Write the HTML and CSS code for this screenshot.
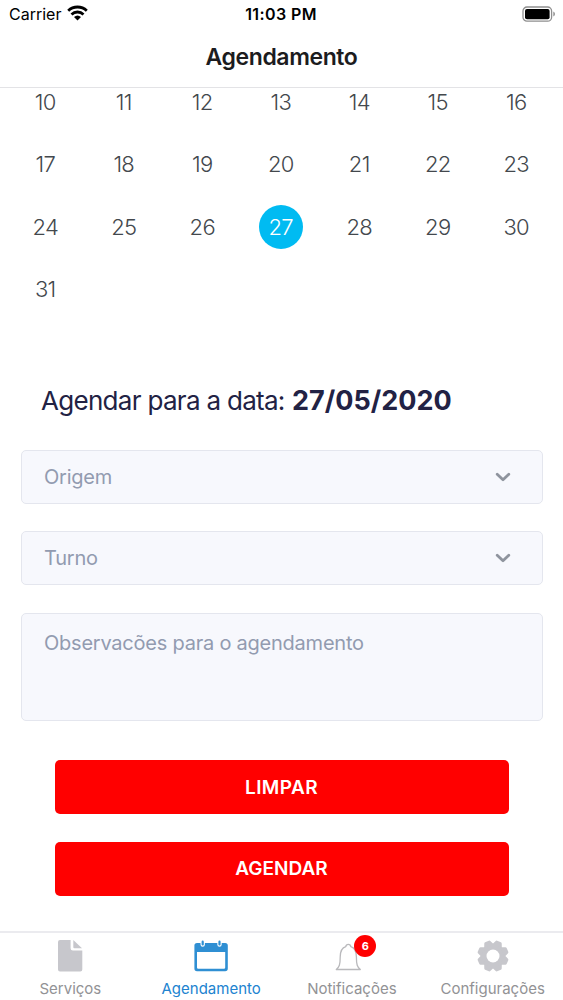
FILE: index.html
```html
<!DOCTYPE html>
<html lang="pt-BR">
<head>
    <meta charset="UTF-8">
    <meta name="viewport" content="width=device-width, initial-scale=1.0">
    <title>Agendamento</title>
    <link rel="stylesheet" href="styles.css">
</head>
<body>
    <header class="header">
        <div class="status-bar">
            <div class="carrier">
                <span>Carrier</span>
                <svg class="wifi" width="21" height="16" viewBox="0 0 21 16">
                    <g fill="none" stroke="#000" stroke-width="2.8">
                        <path d="M1.2 5.7a13.6 13.6 0 0 1 18.6 0"/>
                        <path d="M4.5 9.4a8.7 8.7 0 0 1 12 0"/>
                    </g>
                    <path d="M7 12a5.2 5.2 0 0 1 7 0l-3.5 3.5z"/>
                </svg>
            </div>
            <div class="time">11:03 PM</div>
            <div class="battery">
                <svg width="34" height="17" viewBox="0 0 34 17">
                    <rect x="1" y="1" width="28.6" height="14.2" rx="4" fill="none" stroke="#8e8e8e" stroke-width="1.3"/>
                    <rect x="3" y="3" width="24.6" height="10.2" rx="2" fill="#000"/>
                    <path d="M31.3 5.6q1.7.8 1.7 2.5t-1.7 2.5z" fill="#8e8e8e"/>
                </svg>
            </div>
        </div>
        <h1 class="title">Agendamento</h1>
    </header>

    <main class="content">
        <div class="calendar">
            <div class="day">10</div>
            <div class="day">11</div>
            <div class="day">12</div>
            <div class="day">13</div>
            <div class="day">14</div>
            <div class="day">15</div>
            <div class="day">16</div>
            <div class="day">17</div>
            <div class="day">18</div>
            <div class="day">19</div>
            <div class="day">20</div>
            <div class="day">21</div>
            <div class="day">22</div>
            <div class="day">23</div>
            <div class="day">24</div>
            <div class="day">25</div>
            <div class="day">26</div>
            <div class="day selected"><span>27</span></div>
            <div class="day">28</div>
            <div class="day">29</div>
            <div class="day">30</div>
            <div class="day">31</div>
        </div>

        <p class="date-label"><span class="date-text">Agendar para a data:</span> <b>27/05/2020</b></p>

        <form class="form">
            <div class="field">
                <span>Origem</span>
                <svg width="16" height="10" viewBox="0 0 16 10"><path d="M2.2 2.2 8 7.8l5.8-5.6"/></svg>
            </div>
            <div class="field">
                <span>Turno</span>
                <svg width="16" height="10" viewBox="0 0 16 10"><path d="M2.2 2.2 8 7.8l5.8-5.6"/></svg>
            </div>
            <textarea class="field notes" placeholder="Observacões para o agendamento"></textarea>
            <button type="button" class="btn btn-clear">LIMPAR</button>
            <button type="button" class="btn">AGENDAR</button>
        </form>
    </main>

    <nav class="tabs">
        <a class="tab">
            <svg width="36" height="36" viewBox="0 0 36 36" fill="#c7c7cc">
                <path d="M8 2h10.6v8.2a2.3 2.3 0 0 0 2.3 2.3h9.4v19a2 2 0 0 1-2 2H8a2 2 0 0 1-2-2V4a2 2 0 0 1 2-2z"/>
                <path d="M21.3 2l8.7 8.2h-7.7a1 1 0 0 1-1-1z"/>
            </svg>
            <span>Serviços</span>
        </a>
        <a class="tab active">
            <svg width="36" height="36" viewBox="0 0 36 36">
                <path fill="#2f8fd3" fill-rule="evenodd" d="M4 5h3.5v1.5a2.2 2.2 0 0 0 4.4 0V5h12.4v1.5a2.2 2.2 0 0 0 4.4 0V5h3.5a2.6 2.6 0 0 1 2.6 2.6v23a2.6 2.6 0 0 1-2.6 2.6H4a2.6 2.6 0 0 1-2.6-2.6v-23A2.6 2.6 0 0 1 4 5zM4 14v15.500a1.3 1.3 0 0 0 1.3 1.3h25.600a1.3 1.3 0 0 0 1.3-1.3V14z"/>
                <path d="M9.7 3.7v2.8M26.5 3.7v2.8" stroke="#2f8fd3" stroke-width="2.2" stroke-linecap="round"/>
            </svg>
            <span>Agendamento</span>
        </a>
        <a class="tab">
            <div class="bell">
                <svg width="36" height="36" viewBox="0 0 36 36" fill="none" stroke="#b9b9bc" stroke-width="1.3">
                    <path d="M3.300 31.500h24c-3-2.700-3.900-4.500-3.900-12.500 0-6.500-2.400-9.500-5.600-10.400-.2-1.600-1-2.300-2.500-2.300s-2.300.7-2.500 2.300C9.600 9.500 7.200 12.500 7.200 19c0 8-.9 9.800-3.900 12.500z" stroke-linejoin="round"/>
                </svg>
                <span class="badge">6</span>
            </div>
            <span>Notificações</span>
        </a>
        <a class="tab">
            <svg width="36" height="36" viewBox="-18 -18 36 36">
                <g fill="#c7c7cc">
                    <circle r="12"/>
                    <g id="teeth">
                        <path id="tooth" d="M-5.2-10.5-3.4-14.600q.4-1.100 1.4-1.100h4q1 0 1.4 1.100L5.2-10.5z" transform="rotate(22.5)"/>
                        <use href="#tooth" transform="rotate(45)"/>
                        <use href="#tooth" transform="rotate(90)"/>
                        <use href="#tooth" transform="rotate(135)"/>
                    </g>
                    <use href="#teeth" transform="rotate(180)"/>
                </g>
                <circle r="6.5" fill="#fff"/>
            </svg>
            <span>Configurações</span>
        </a>
    </nav>
</body>
</html>
```
FILE: styles.css
```css
* {
    box-sizing: border-box;
}
body {
    margin: 0;
    height: 1000px;
    display: flex;
    flex-direction: column;
    overflow: hidden;
    font-family: Inter, "Liberation Sans", sans-serif;
    background-color: #fff;
}
.header {
    height: 88px;
    border-bottom: 1px solid #e3e3e6;
}
.status-bar {
    display: grid;
    grid-template-columns: 1fr auto 1fr;
    align-items: center;
    height: 28px;
    padding: 0 8px 0 9px;
}
.carrier {
    display: flex;
    align-items: center;
    gap: 6px;
    font-size: 16px;
}
.wifi {
    margin-top: -2px;
}
.time {
    font-size: 16px;
    font-weight: 600;
    letter-spacing: 0.4px;
    margin-right: 2px;
}
.battery {
    display: flex;
    justify-content: flex-end;
    margin-right: -1px;
}
.title {
    margin: 0;
    line-height: 59px;
    text-align: center;
    font-size: 23px;
    font-weight: 600;
    letter-spacing: -0.4px;
    color: #1c1c1e;
}
.content {
    flex: 1;
    min-height: 0;
    overflow: hidden;
}
.calendar {
    display: grid;
    grid-template-columns: repeat(7, 78.5px);
    grid-auto-rows: 62.5px;
    margin: -17.5px 0 0 6px;
}
.day {
    display: flex;
    align-items: center;
    justify-content: center;
    font-size: 22px;
    font-weight: 300;
    letter-spacing: -0.7px;
    color: #43484d;
}
.selected span {
    width: 44px;
    height: 44px;
    line-height: 44px;
    border-radius: 50%;
    text-align: center;
    background-color: #00bbf2;
    color: #fff;
}
.date-label {
    margin: 61px 0 0 41px;
    height: 38px;
    line-height: 38px;
    font-size: 26px;
    color: #222244;
    white-space: nowrap;
}
.date-text {
    letter-spacing: -0.7px;
}
.date-label b {
    font-size: 27px;
    letter-spacing: 0.02px;
}
.form {
    display: flex;
    flex-direction: column;
    gap: 27.5px;
    padding: 30px 20.5px 0;
}
.field {
    display: flex;
    align-items: center;
    justify-content: space-between;
    height: 54px;
    padding: 0 31px 0 22.5px;
    border: 1px solid #e4e6ee;
    border-radius: 5px;
    background-color: #f7f8fd;
    font-size: 20px;
    letter-spacing: -0.23px;
    color: #929bb0;
}
.field path {
    fill: none;
    stroke: #8f949e;
    stroke-width: 2.8;
    stroke-linecap: round;
    stroke-linejoin: round;
}
.notes {
    display: block;
    height: 108px;
    padding: 17px 22.5px;
    line-height: 24px;
    font-family: inherit;
    resize: none;
}
.notes::placeholder {
    color: #929bb0;
}
.btn {
    height: 54px;
    margin: 0 34px;
    padding: 0;
    border: none;
    border-radius: 5px;
    background-color: #ff0000;
    color: #fff;
    font-family: inherit;
    font-size: 19px;
    font-weight: 600;
}
.btn-clear {
    margin-top: 12px;
    letter-spacing: 0.4px;
}
.tabs {
    display: grid;
    grid-template-columns: repeat(4, 1fr);
    height: 69px;
    border-top: 2px solid #ebebef;
}
.tab {
    display: flex;
    flex-direction: column;
    align-items: center;
    padding-top: 5px;
    font-size: 15px;
    line-height: 18px;
    color: #929295;
}
.tab > span {
    margin-top: 6px;
}
.active {
    color: #2183d0;
}
.bell {
    position: relative;
    height: 36px;
    margin-right: 1px;
}
.badge {
    position: absolute;
    top: -3px;
    left: 21px;
    width: 22px;
    height: 22px;
    line-height: 22px;
    border-radius: 50%;
    background-color: #ff0000;
    color: #fff;
    text-align: center;
    font-size: 11px;
    font-weight: 700;
}
```
